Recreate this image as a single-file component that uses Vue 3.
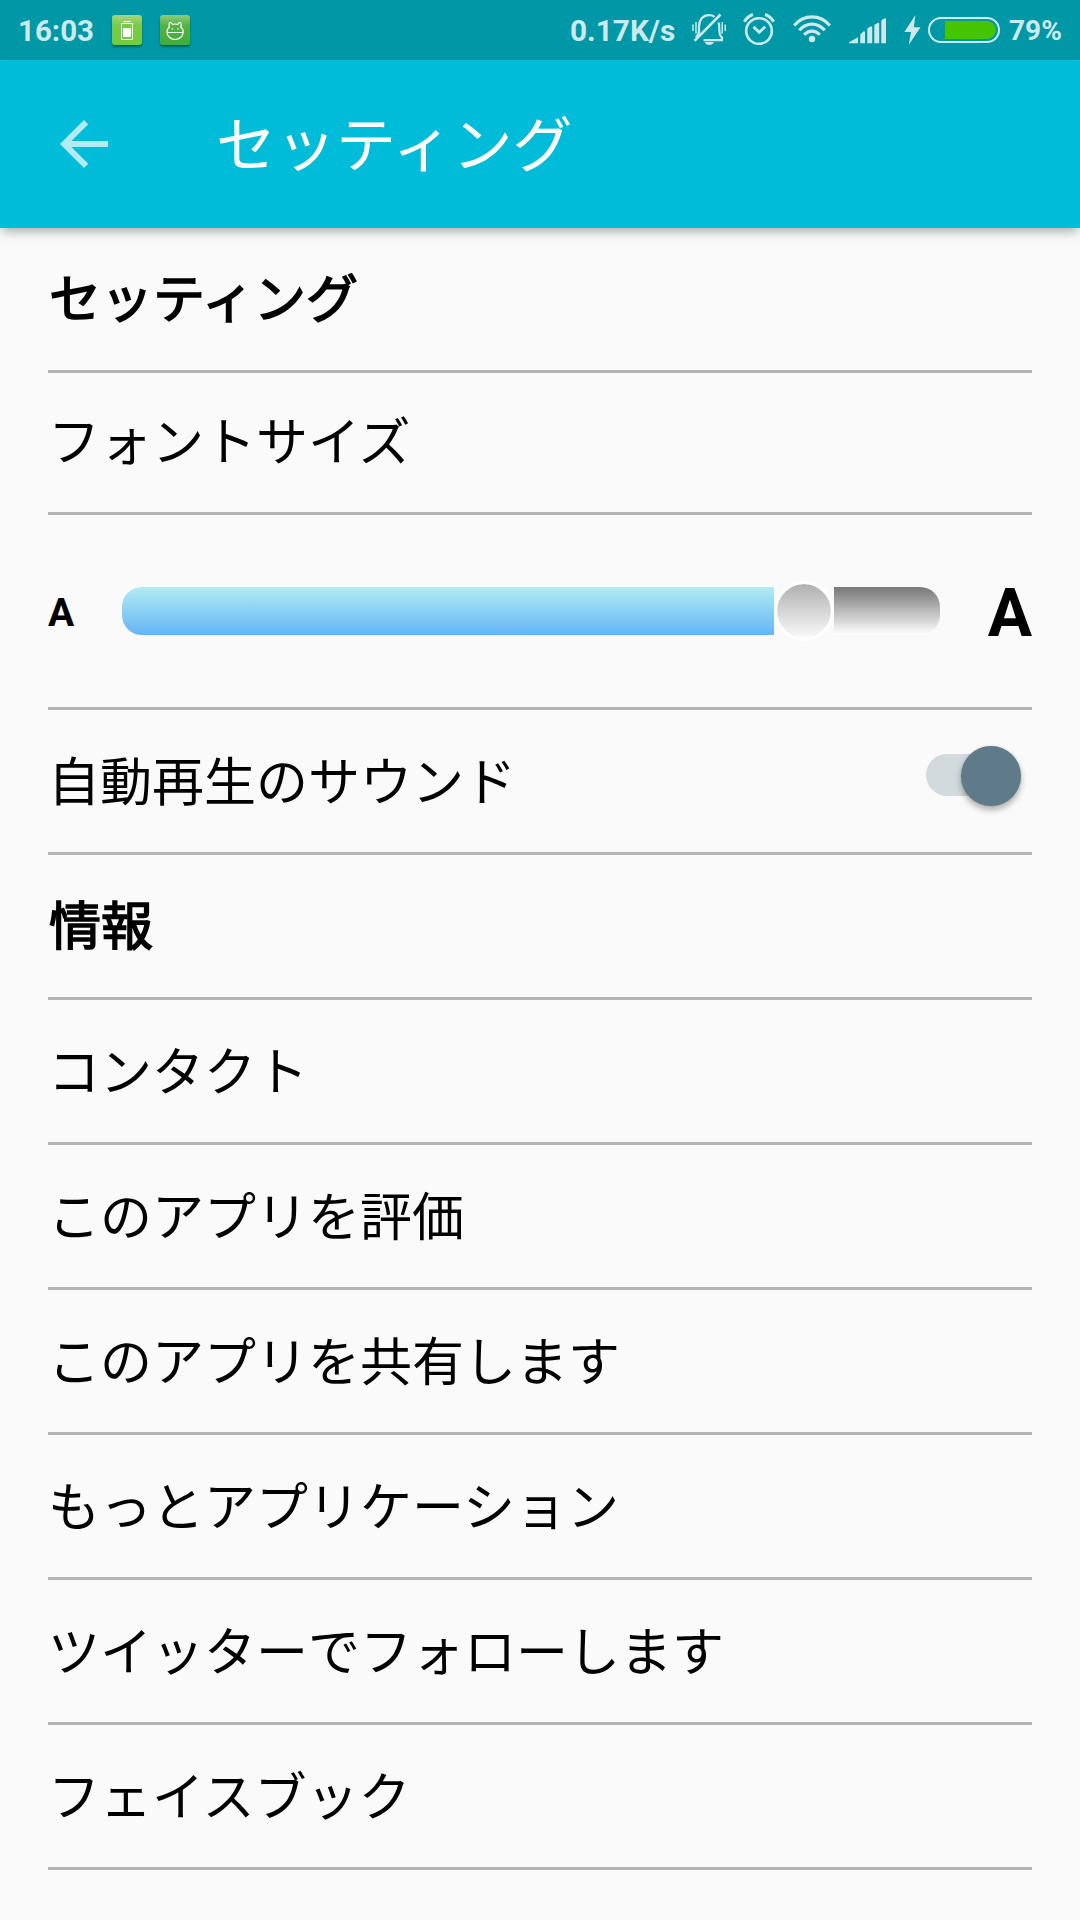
<template>
  <div class="screen">
    <!-- Status bar -->
    <div class="status">
      <span class="clock">16:03</span>

      <span class="app-badge">
        <svg width="30" height="30" viewBox="0 0 30 30" fill="none" stroke="#fff">
          <path d="M11.5 6.5h7" />
          <rect x="9.5" y="8.500" width="11" height="16" />
          <path d="M11 13h8v9h-8z" fill="#fff" stroke="none" />
        </svg>
      </span>
      <span class="app-badge app-badge--bug">
        <svg width="30" height="30" viewBox="0 0 30 30" fill="none" stroke="#fff" stroke-width="1.2">
          <path d="M9.800 12.500c-1.500-2.700-.8-5 .4-5 1 0 1.800.8 2.300 2 1.600-.6 3.600-.6 5.200 0 .5-1.200 1.300-2 2.300-2 1.200 0 1.900 2.300.4 5" />
          <path d="M9.800 11.500C8 13 7 14.500 7 16.800c0 4.400 3.600 7.700 8.100 7.700s8.100-3.300 8.100-7.700c0-2.300-1-3.800-2.800-5.300" />
          <path d="M7 17.500h16.200M11.700 13.800h1.300M17.300 13.800h1.300" />
        </svg>
      </span>

      <span class="speed">0.17K/s</span>

      <!-- Muted bell -->
      <svg class="ic-bell" width="34" height="33" viewBox="0 0 34 33" fill="none" stroke="currentColor" stroke-width="2.200">
        <path d="M2.500 27.800L28.500 1.500" stroke-width="2.600" />
        <path d="M7 20v-6C7 6.500 11 2.200 17 2.200c2.400 0 4.200.6 5.600 1.700" />
        <path d="M26.600 9.500c.5 1.500.6 3 .6 5 0 6 .6 8.500 2.800 10v2.700H11.500" />
        <path d="M3.800 24.500c2-1.500 3-3 3.200-6" />
        <path d="M1 11.500v6.500M4 9v11.500M30.200 9v11.500M33.200 11.500v6.500" stroke-width="1.500" />
        <path d="M12.500 29h9.500c-1 2-2.600 3-4.700 3s-3.800-1-4.800-3z" fill="currentColor" stroke="none" />
      </svg>

      <!-- Alarm -->
      <svg class="ic-alarm" width="32" height="32" viewBox="0 0 32 32" fill="none" stroke="currentColor">
        <circle cx="16" cy="18" r="12.800" stroke-width="2.600" />
        <path d="M10.500 13.700l5.700 5.600 6-5.600" stroke-width="2.800" />
        <path d="M1.300 8.800C3.500 5 6.300 2.700 10 1.500M30.700 8.800C28.500 5 25.700 2.700 22 1.500" stroke-width="3" />
      </svg>

      <!-- Wi-Fi -->
      <svg class="ic-wifi" width="38" height="28" viewBox="0 0 38 28" fill="none" stroke="currentColor" stroke-width="3.200">
        <path d="M1.200 10.500C11-.9 27-.9 36.800 10.500" />
        <path d="M6.200 15.200c7.300-8.200 18.300-8.200 25.600 0" />
        <path d="M11.200 19.800c4.500-5 11.100-5 15.600 0" />
        <circle cx="19" cy="24" r="3.200" fill="currentColor" stroke="none" />
      </svg>

      <!-- Signal -->
      <svg class="ic-signal" width="38" height="26" viewBox="0 0 38 26" fill="currentColor">
        <path d="M0 25.200v-1L9 19.300v5.900zM11.300 25.200V16.500l3-3q1.500-.5 1.700.7v11zM18.300 25.200V10.500l3.200-2q1.500-.5 1.700.7v16zM25.300 25.200V7l3.200-2q1.500-.5 1.700.7v19.500zM32.300 25.200V3q0-1.500 3-2.500 1.700-.6 1.700.8v23.900z" />
      </svg>

      <!-- Charging -->
      <svg class="ic-bolt" width="17" height="30" viewBox="0 0 17 30" fill="currentColor">
        <path d="M11.500 0L.3 17H7L4.700 30 16.500 12.200H9.800z" />
      </svg>
      <span class="battery"><span class="battery-level" /></span>
      <span class="percent">79%</span>
    </div>

    <!-- App bar -->
    <header class="bar">
      <svg class="back" width="72" height="72" viewBox="0 0 24 24" fill="currentColor">
        <path d="M20 11H7.830l5.590-5.590L12 4l-8 8 8 8 1.410-1.410L7.830 13H20v-2z" />
      </svg>
      <h1 class="title">セッティング</h1>
    </header>

    <main class="list">
      <div class="row row--bold row--first">セッティング</div>
      <div class="row row--size">フォントサイズ</div>

      <div class="row row--slider">
        <span class="a-small">A</span>
        <div class="slider">
          <div class="slider-fill" :style="{ width: fontSize + 'px' }" />
          <div class="slider-gap"><div class="slider-knob" /></div>
          <div class="slider-rest" />
        </div>
        <span class="a-big">A</span>
      </div>

      <div class="row">
        <span>自動再生のサウンド</span>
        <button class="switch" role="switch" :aria-checked="autoplay" @click="autoplay = !autoplay">
          <span class="switch-track" />
          <span class="switch-thumb" :class="{ 'switch-thumb--on': autoplay }" />
        </button>
      </div>

      <div class="row row--bold">情報</div>
      <div
        v-for="item in items"
        :key="item.label"
        class="row"
        :class="{ 'row--wide': item.wide }"
      >
        {{ item.label }}
      </div>
    </main>
  </div>
</template>

<script setup>
import { ref } from 'vue'

const fontSize = ref(652)
const autoplay = ref(true)

const items = [
  { label: 'コンタクト' },
  { label: 'このアプリを評価' },
  { label: 'このアプリを共有します' },
  { label: 'もっとアプリケーション' },
  { label: 'ツイッターでフォローします', wide: true },
  { label: 'フェイスブック' },
]
</script>

<style>
body {
  margin: 0;
  background: #fafafa;
}
</style>

<style scoped>
.screen {
  width: 1080px;
  height: 1920px;
  overflow: hidden;
  background: #fafafa;
  color: #000;
  font-family: Roboto, 'Noto Sans CJK JP', sans-serif;
}

/* ── STATUS BAR ── */
.status {
  display: flex;
  align-items: flex-start;
  box-sizing: border-box;
  height: 60px;
  padding-left: 18px;
  background: #0097a7;
  color: #cceaed;
  font-size: 29.5px;
  font-weight: 700;
  line-height: 62px;
  white-space: nowrap;
}
.status svg { display: block; flex-shrink: 0; }

.clock { width: 94px; }
.app-badge {
  width: 30px;
  height: 30px;
  margin: 15px 18px 0 0;
  border-radius: 3px;
  background: linear-gradient(#a4d67c, #78cb48 35%, #70cc3c);
  box-shadow: 0 2px 2px rgba(0, 50, 60, 0.5);
}
.app-badge--bug { background: linear-gradient(#8fcb7c, #55b144 35%, #3fae3c); }

.speed { width: 122px; margin-left: 362px; font-size: 29.8px; }
.ic-bell { margin-top: 13px; }
.ic-alarm { margin: 13px 0 0 17px; }
.ic-wifi { margin: 15px 0 0 18px; }
.ic-signal { margin: 18px 0 0 18px; }
.ic-bolt { margin: 15px 0 0 17px; }

.battery {
  display: flex;
  justify-content: flex-end;
  box-sizing: border-box;
  width: 72px;
  height: 26px;
  margin: 17px 9px 0 7px;
  padding: 2px;
  border: 2px solid #cceaed;
  border-radius: 13px;
}
.battery-level {
  width: 51px;
  height: 18px;
  border-radius: 0 9px 9px 0;
  background: #46c400;
}
.percent { font-size: 28px; }

/* ── APP BAR ── */
.bar {
  position: relative;
  display: flex;
  align-items: center;
  height: 168px;
  padding-left: 48px;
  background: #00bcd8;
  color: #fff;
  box-shadow: 0 6px 10px -2px rgba(0, 0, 0, 0.3);
}
.back { color: #b2ebf3; }
.title {
  margin: 0 0 0 96px;
  padding-top: 5px;
  font-size: 60px;
  font-weight: 400;
  line-height: 80px;
}

/* ── LIST ── */
.list { padding: 0 48px; }
.row {
  display: flex;
  align-items: center;
  justify-content: space-between;
  box-sizing: border-box;
  height: 145px;
  padding-top: 5px;
  border-bottom: 3px solid #b4b4b4;
  font-size: 52px;
  line-height: 76px;
}
.row--wide { font-kerning: none; }
.row--bold {
  padding-top: 3px;
  padding-left: 1px;
  -webkit-text-stroke: 1.6px #000;
}
.row--size {
  height: 142px;
  padding-top: 2px;
}

/* ── SLIDER ── */
.row--slider {
  height: 195px;
  padding-top: 0;
  font-weight: 700;
}
.a-small { width: 74px; padding-top: 4px; font-size: 39px; }
.a-big { padding-top: 5px; font-size: 66px; }
.slider {
  display: flex;
  width: 818px;
  height: 48px;
  margin-right: auto;
}
.slider-fill {
  border-radius: 20px 0 0 20px;
  background: linear-gradient(#b2ebf2, #64b5f6);
}
.slider-gap {
  display: flex;
  align-items: center;
  justify-content: center;
  width: 60px;
}
.slider-knob {
  flex-shrink: 0;
  width: 54px;
  height: 54px;
  border: 3px solid #fff;
  border-radius: 50%;
  background: linear-gradient(#b0b0b0, #fafafa) padding-box;
}
.slider-rest {
  flex: 1;
  border-radius: 0 20px 20px 0;
  background: linear-gradient(#777, #fff);
}

/* ── SWITCH ── */
.switch {
  position: relative;
  width: 96px;
  height: 60px;
  margin: 0 10px 17px 0;
  padding: 0;
  border: none;
  background: none;
}
.switch-track {
  position: absolute;
  top: 9px;
  left: 0;
  width: 84px;
  height: 42px;
  border-radius: 21px;
  background: #d2dadd;
}
.switch-thumb {
  position: absolute;
  top: 0.5px;
  left: 0;
  width: 60px;
  height: 60px;
  border-radius: 50%;
  background: #5f7b89;
  box-shadow: 0 4px 6px rgba(0, 0, 0, 0.3), 0 0 2px rgba(0, 0, 0, 0.15);
}
.switch-thumb--on { left: 35px; }
</style>
